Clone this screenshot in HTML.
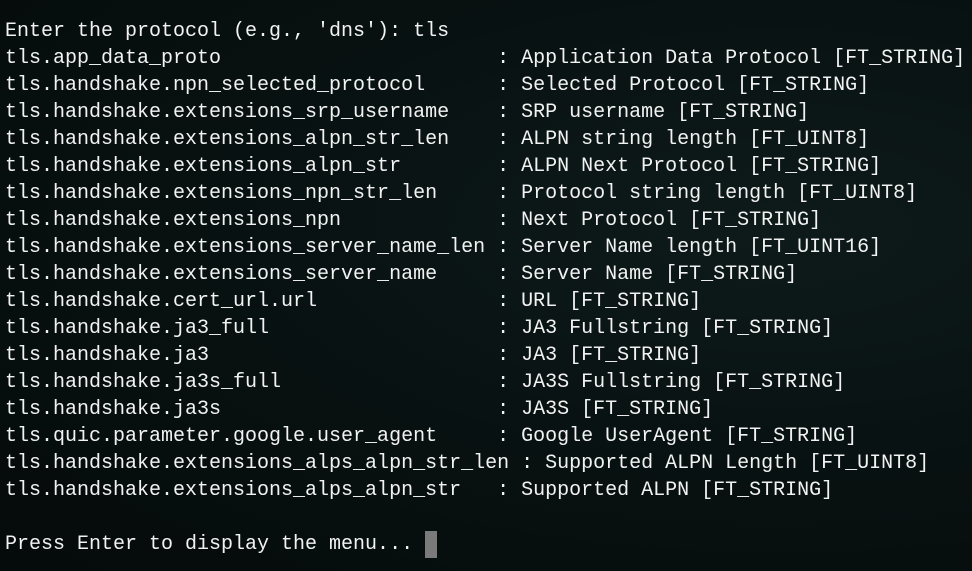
<!DOCTYPE html>
<html><head><style>
html,body{margin:0;padding:0;width:972px;height:571px;overflow:hidden;background:#081010;}
body{background:radial-gradient(ellipse at 80% 40%,#0e1a1a 0%,#081111 50%,#050a0a 100%);}
pre{margin:0;position:absolute;left:5px;top:18px;font-family:"Liberation Mono",monospace;font-size:20px;line-height:27px;color:#f2f2f2;}
.cur{display:inline-block;width:12px;height:27px;background:#7a7a7a;vertical-align:top;}
</style></head><body><pre>Enter the protocol (e.g., 'dns'): tls
tls.app_data_proto                       : Application Data Protocol [FT_STRING]
tls.handshake.npn_selected_protocol      : Selected Protocol [FT_STRING]
tls.handshake.extensions_srp_username    : SRP username [FT_STRING]
tls.handshake.extensions_alpn_str_len    : ALPN string length [FT_UINT8]
tls.handshake.extensions_alpn_str        : ALPN Next Protocol [FT_STRING]
tls.handshake.extensions_npn_str_len     : Protocol string length [FT_UINT8]
tls.handshake.extensions_npn             : Next Protocol [FT_STRING]
tls.handshake.extensions_server_name_len : Server Name length [FT_UINT16]
tls.handshake.extensions_server_name     : Server Name [FT_STRING]
tls.handshake.cert_url.url               : URL [FT_STRING]
tls.handshake.ja3_full                   : JA3 Fullstring [FT_STRING]
tls.handshake.ja3                        : JA3 [FT_STRING]
tls.handshake.ja3s_full                  : JA3S Fullstring [FT_STRING]
tls.handshake.ja3s                       : JA3S [FT_STRING]
tls.quic.parameter.google.user_agent     : Google UserAgent [FT_STRING]
tls.handshake.extensions_alps_alpn_str_len : Supported ALPN Length [FT_UINT8]
tls.handshake.extensions_alps_alpn_str   : Supported ALPN [FT_STRING]

Press Enter to display the menu... <span class="cur"></span></pre></body></html>
